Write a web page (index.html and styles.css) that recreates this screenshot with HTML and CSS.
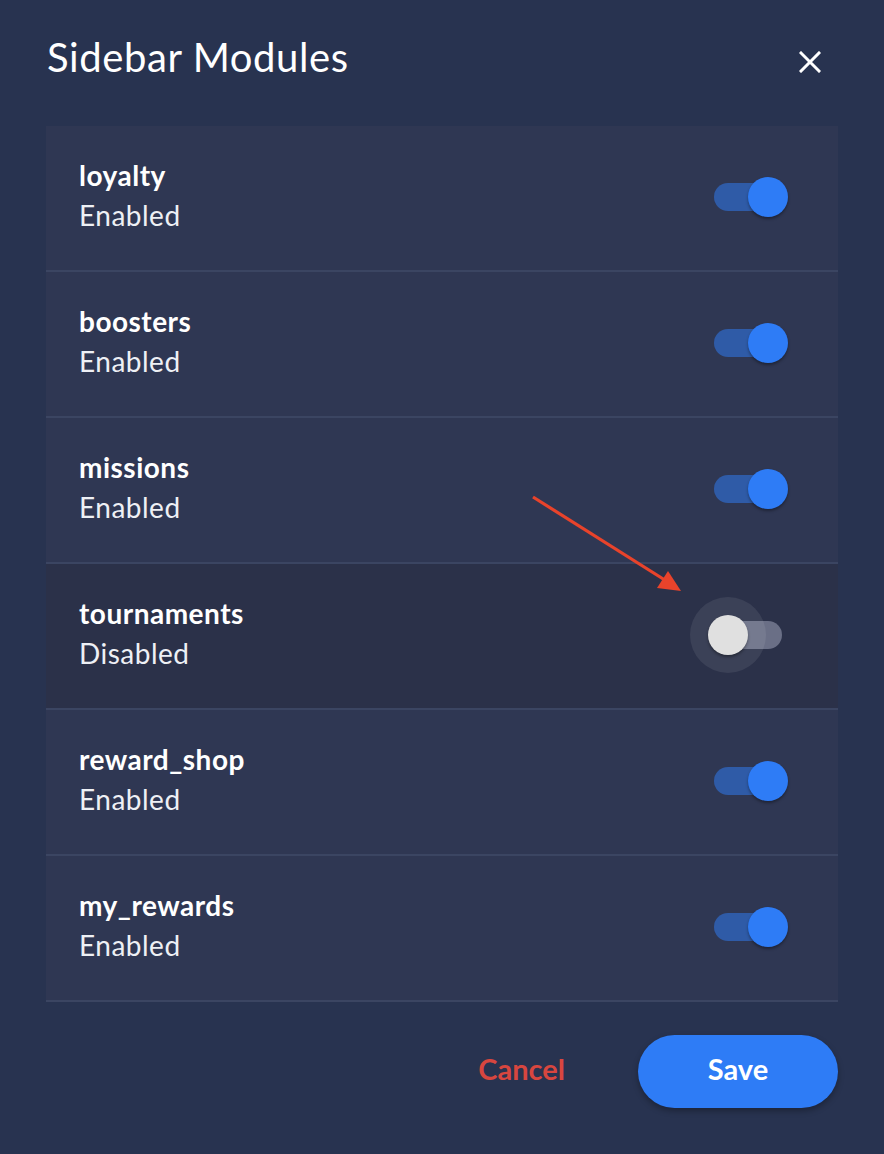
FILE: index.html
```html
<!DOCTYPE html>
<html>
<head>
<meta charset="utf-8">
<link rel="stylesheet" href="styles.css">
</head>
<body>
<div class="dialog">
  <div class="header">
    <h1 class="title">Sidebar Modules</h1>
    <button class="close" aria-label="Close">
      <svg width="22" height="22" viewBox="0 0 22 22"><path d="M2 2L20 20M20 2L2 20" stroke="#fff" stroke-width="3" stroke-linecap="square"/></svg>
    </button>
  </div>
  <div class="list">
    <div class="row">
      <div class="info"><div class="name">loyalty</div><div class="status">Enabled</div></div>
      <div class="switch on"><span class="track"></span><span class="thumb"></span></div>
    </div>
    <div class="row">
      <div class="info"><div class="name">boosters</div><div class="status">Enabled</div></div>
      <div class="switch on"><span class="track"></span><span class="thumb"></span></div>
    </div>
    <div class="row">
      <div class="info"><div class="name">missions</div><div class="status">Enabled</div></div>
      <div class="switch on"><span class="track"></span><span class="thumb"></span></div>
    </div>
    <div class="row row-off">
      <div class="info"><div class="name">tournaments</div><div class="status">Disabled</div></div>
      <div class="switch off"><span class="track"></span><span class="halo"></span><span class="thumb"></span></div>
    </div>
    <div class="row">
      <div class="info"><div class="name">reward_shop</div><div class="status">Enabled</div></div>
      <div class="switch on"><span class="track"></span><span class="thumb"></span></div>
    </div>
    <div class="row">
      <div class="info"><div class="name">my_rewards</div><div class="status">Enabled</div></div>
      <div class="switch on"><span class="track"></span><span class="thumb"></span></div>
    </div>
  </div>
  <div class="footer">
    <button class="btn-cancel">Cancel</button>
    <button class="btn-save">Save</button>
  </div>
  <svg class="arrow" width="884" height="1154" viewBox="0 0 884 1154">
    <line x1="533" y1="497" x2="668" y2="582" stroke="#e8432b" stroke-width="3.2"/>
    <polygon points="681,591 657,588 668,571" fill="#e8432b"/>
  </svg>
</div>
</body>
</html>
```
FILE: styles.css
```css
html, body {
  margin: 0;
  padding: 0;
  background: #283350;
}
body {
  font-family: "Lato", "Open Sans", sans-serif;
  color: #fff;
  width: 884px;
  height: 1154px;
  overflow: hidden;
}
.dialog {
  position: relative;
  padding: 0 46px;
}
.header {
  height: 126px;
  display: flex;
  justify-content: space-between;
  align-items: flex-start;
}
.title {
  margin: 33px 0 0 1px;
  font-weight: 400;
  font-size: 40px;
  line-height: 48px;
  letter-spacing: 0.6px;
}
.close {
  margin: 51px 17px 0 0;
  padding: 0;
  border: 0;
  background: none;
  width: 22px;
  height: 22px;
  display: flex;
}
.list {
  display: flex;
  flex-direction: column;
}
.row {
  height: 144px;
  border-bottom: 2px solid #3b4562;
  background: #2f3753;
  display: flex;
  align-items: center;
  justify-content: space-between;
  padding: 0 50px 0 33px;
}
.row-off {
  background: #2b3149;
}
.info {
  display: flex;
  flex-direction: column;
  margin-top: -6px;
}
.name {
  font-weight: 700;
  font-size: 28px;
  line-height: 40px;
  letter-spacing: 0.5px;
}
.status {
  font-weight: 400;
  font-size: 28px;
  line-height: 40px;
  letter-spacing: 0.5px;
  color: #eef0f5;
}
.switch {
  position: relative;
  width: 80px;
  height: 40px;
  margin-top: -2px;
}
.track {
  position: absolute;
  left: 6px;
  top: 6px;
  width: 68px;
  height: 28px;
  border-radius: 14px;
  background: #2f5ba7;
}
.switch.off .track {
  background: #6a6f86;
}
.thumb {
  position: absolute;
  top: 0;
  width: 40px;
  height: 40px;
  border-radius: 50%;
  box-shadow: 0 2px 3px rgba(0,0,0,0.35);
}
.switch.on .thumb {
  left: 40px;
  background: #2e7cf6;
}
.switch.off .thumb {
  left: 0;
  background: #e0e0e0;
}
.halo {
  position: absolute;
  left: -18px;
  top: -18px;
  width: 76px;
  height: 76px;
  border-radius: 50%;
  background: rgba(255,255,255,0.08);
}
.footer {
  display: flex;
  justify-content: flex-end;
  align-items: center;
  margin-top: 33px;
  gap: 57px;
}
.btn-cancel {
  border: 0;
  background: none;
  color: #d8463f;
  font-family: inherit;
  font-weight: 700;
  font-size: 29px;
  padding: 0 16px 6px;
  height: 73px;
}
.btn-save {
  border: 0;
  width: 200px;
  height: 73px;
  padding: 0 0 6px;
  border-radius: 37px;
  background: #2e7cf6;
  color: #fff;
  font-family: inherit;
  font-weight: 700;
  font-size: 29px;
  box-shadow: 0 3px 6px rgba(0,0,0,0.3);
}
.arrow {
  position: absolute;
  left: 0;
  top: 0;
  pointer-events: none;
}
```
